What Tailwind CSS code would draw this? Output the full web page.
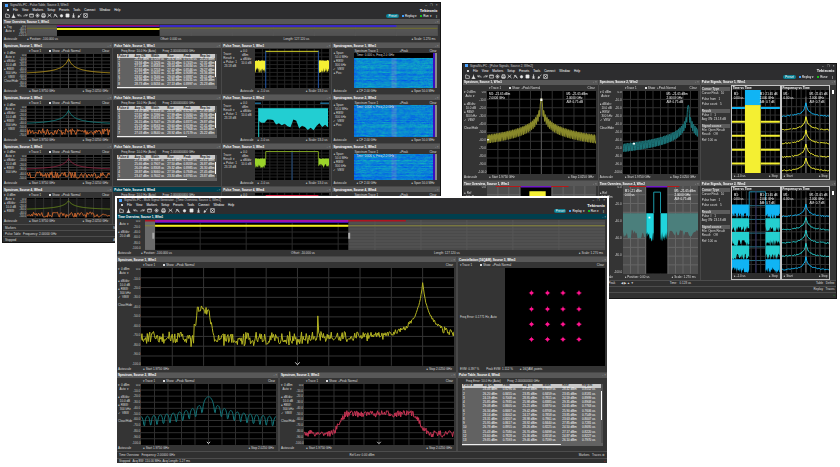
<!DOCTYPE html>
<html lang="en">
<head>
<meta charset="utf-8">
<title>SignalVu-PC displays</title>
<script src="https://cdn.jsdelivr.net/npm/@tailwindcss/browser@4"></script>
</head>
<body class="bg-white font-['Liberation_Sans',Arial,sans-serif]">
<main class="relative h-screen w-full overflow-hidden text-[3px] leading-[4px] text-white">
  <section id="pulse" aria-label="Pulse analysis" class="absolute left-[0.25%] top-[0.45%] grid h-[51.6%] w-[52.2%] grid-cols-1 grid-rows-[16px_23fr_52fr_49fr_43fr_38fr_6px_6px_6px] overflow-hidden border border-[#151515] bg-[#484848]"></section>
  <section id="spectra" aria-label="Spectrum analysis" class="absolute left-[55%] top-[13.4%] grid h-[50.6%] w-[44.7%] grid-cols-1 grid-rows-[16px_102fr_101fr_6px_6px_6px] overflow-hidden border border-[#151515] bg-[#484848]"></section>
  <section id="overview" aria-label="Time overview" class="absolute left-[13.7%] top-[42%] grid h-[57.5%] w-[58.8%] grid-cols-1 grid-rows-[16px_42fr_116fr_79fr_7px_5px] overflow-hidden border-2 border-white bg-[#484848]"></section>
</main>
<script>
let seed = 7;
const rnd = () => (seed = (seed * 16807) % 2147483647) / 2147483647;
let uid = 0;

// Toolbar icons, drawn in a 16-unit box
const ICONS = {
  Open: '<path d="M2 14V3h5l2 3h5v8z" fill="none"/>',
  Save: '<path d="M8 2v8M4 14l4-8 4 8zM2 14h12"/>',
  Undo: '<path d="M3 3v6h6M3 9c3-5 10-5 10 3" fill="none"/>',
  Redo: '<path d="M13 3v6H7M13 9C10 4 3 4 3 12" fill="none"/>',
  Window: '<path d="M2 3h12v10H2zM2 5h12" fill="none"/>',
  Settings: '<circle cx="8" cy="8" r="5" fill="none" stroke-width="3" stroke-dasharray="3 1"/><circle cx="8" cy="8" r="2"/>',
  Print: '<path d="M4 6V2h8v4M2 6h12v6H2zM4 10h8v4H4z" fill="none"/>',
  Trace: '<path d="M2 14 7 7 3 2M14 14 9 7l4-5M5 8h6" fill="none"/>',
  Peak: '<path d="M2 14 8 3l6 11M3 3l10 10" fill="none"/>',
  Marker: '<circle cx="8" cy="9" r="4"/>',
  Stop: '<path d="M3 3h10v10H3z"/>',
  Mark: '<path d="M8 2v10M5 9l3 4 3-4zM4 14h8M6 3h4"/>',
  Brush: '<path d="M14 2 8 9M3 14l2-6 4 4z"/>',
  Close: '<path d="M2 2h12v12H2zM4 4l8 8M12 4l-8 8" fill="none"/>'
};
const icon = n => `<button aria-label="${n}" class="size-[5px]"><svg viewBox="0 0 16 16" class="size-full fill-[#e8e8e8] stroke-[#e8e8e8] stroke-2">${ICONS[n]}</svg></button>`;

const chrome = (title, gap = 'gap-[1px]') => `
<header class="flex justify-between bg-[#2d2d2f] pl-[2px] pr-[2px]">
  <div class="flex flex-col justify-between">
    <div class="flex items-center gap-[2px] text-[#d0d0d0]"><i class="size-[3px] bg-[#4aa3ff]"></i><h1>${title}</h1></div>
    <nav class="flex items-center gap-[4px] pl-[2px]"><i class="size-[2px] bg-[#ccc]"></i>${['File', 'View', 'Markers', 'Setup', 'Presets', 'Tools', 'Connect', 'Window', 'Help'].map(m => `<button>${m}</button>`).join('')}</nav>
    <div class="flex ${gap} pb-[1px]">${Object.keys(ICONS).map(icon).join('')}</div>
  </div>
  <div class="flex flex-col items-end justify-between">
    <div class="flex gap-[3px] text-[#ddd]"><button aria-label="Minimize">–</button><button aria-label="Restore">❐</button><button aria-label="Close window">×</button></div>
    <strong class="text-[4px] leading-[4px]">Tektronix</strong>
    <div class="flex items-center gap-[3px] pb-[1px]"><button class="rounded-full bg-[#0b7f93] px-[2px]">Preset</button><button class="flex items-center gap-[1px]"><i class="size-[2px] bg-[#39a0ff]"></i>Replay ▾</button><button class="flex items-center gap-[1px]"><i class="size-[2px] bg-[#19c019]"></i>Run ▾</button><span>⋮</span></div>
  </div>
</header>`;

const panel = (title, body, active) => `
<section class="flex min-h-0 min-w-0 flex-col overflow-hidden bg-[#343434]">
  <h2 class="flex h-[5px] shrink-0 items-center justify-between px-[1px] font-bold ${active ? 'bg-[#003f4e]' : 'bg-[#585858]'}"><span class="whitespace-nowrap">${title}</span><span class="font-normal text-[#aaa]">▫ ×</span></h2>
  <div class="flex min-h-0 flex-1">${body}</div>
</section>`;

const side = (items, foot = 'Autoscale', w = 'w-[15px]', pt = 'pt-[5px]') => `
<div class="flex ${w} shrink-0 flex-col whitespace-nowrap pl-[1px] ${pt} text-[#ddd]">
  <div class="min-h-0 flex-1">${items.map(t => `<p>${t || '&nbsp;'}</p>`).join('')}</div>${foot ? `<p class="h-[6px] pt-[1px]">${foot}</p>` : ''}</div>`;
const SPEC = ['▾ 0 dBm', '&nbsp; Auto ▾', '', '● dB/div:', '&nbsp; 10.0 dB', '● RBW:', '&nbsp; 300 kHz', '✓ VBW', '', 'Clear/Hide'];
const COMPACT = SPEC.filter(t => t);

const axis = (n, step) => `<div class="flex w-[9px] shrink-0 flex-col justify-between overflow-hidden pr-[1px] text-right text-[#ccc]">${Array.from({ length: n }, (_, i) => `<p class="leading-[3px]">${i ? '-' : ''}${(i * step).toFixed(1)}</p>`).join('')}</div>`;

const tabs = () => { const id = 't' + uid++; return `
<div class="flex h-[6px] shrink-0 items-center gap-[6px] whitespace-nowrap pl-[2px] text-[#ddd]">
  <label for="${id}" class="flex items-center">▾<select id="${id}" class="h-[4px] w-[12px] appearance-none bg-transparent p-0 leading-[4px]"><option>Trace 1</option></select></label>
  <label class="flex items-center gap-[1px]"><input type="checkbox" checked class="size-[2px] appearance-none bg-[#ddd]">Show&nbsp; +Peak Normal</label><button class="ml-auto pr-[1px]">Clear</button></div>`; };
const foot = (a, b) => `<div class="flex h-[6px] shrink-0 items-center justify-between whitespace-nowrap px-[2px] text-[#ddd]"><span>● ${a}</span><span>● ${b}</span></div>`;

const svg = (inner, grid = '#303030', bg = 'bg-black') => {
  let g = '';
  for (let i = 1; i < 10; i++) g += `M${i * 100} 0V1000M0 ${i * 100}H1000`;
  return `<div class="relative min-h-0 min-w-0 flex-1 ${bg}"><svg viewBox="0 0 1000 1000" preserveAspectRatio="none" class="absolute inset-0 size-full *:[vector-effect:non-scaling-stroke]"><path d="${g}" stroke="${grid}" fill="none" stroke-width="1"/>${inner}</svg></div>`;
};
const line = (f, color, n = 160, w = 1) => {
  let d = '';
  for (let i = 0; i <= n; i++) { const x = i / n; d += `${i ? 'L' : 'M'}${Math.round(x * 1000)} ${Math.round(f(x) * 1000)}`; }
  return `<path d="${d}" fill="none" stroke="${color}" stroke-width="${w}" stroke-linejoin="round"/>`;
};
const box = (x, y, w, h, c) => `<rect x="${x}" y="${y}" width="${w}" height="${h}" fill="${c}"/>`;
const seg = (d, c, w = 1) => `<path d="${d}" stroke="${c}" fill="none" stroke-width="${w}"/>`;
const ragged = (x0, x1, y0, y1, amp, c, top = 0) => {
  let d = `M${x0} ${y0}`; const n = 24;
  for (let i = 0; i <= n; i++) d += `L${x0 + (x1 - x0) * i / n} ${y0 + rnd() * top}`;
  for (let i = n; i >= 0; i--) d += `L${x0 + (x1 - x0) * i / n} ${y1 + (rnd() - .3) * amp}`;
  return `<path d="${d}Z" fill="${c}"/>`;
};
const peak = (x, cx = .5) => .62 - .48 / (1 + Math.abs(x - cx) / .08);
const lobes = (cx, k, top, depth) => x => {
  const u = Math.abs(x - cx) * k + 1e-6, env = 20 * Math.log10(Math.max(1, Math.PI * u));
  return top + .0108 * Math.min(-20 * Math.log10(Math.abs(Math.sin(Math.PI * u) / (Math.PI * u)) + 1e-5), env + depth);
};
const spectrum = (title, chart, n = 11, items = SPEC, pt = 'pt-[5px]') => panel(title,
  side(items, 'Autoscale', 'w-[15px]', pt) + `<div class="flex min-w-0 flex-1 flex-col pr-[2px]"><div class="pl-[9px]">${tabs()}</div><div class="flex min-h-0 flex-1">${axis(n, 10)}${chart}</div><div class="pl-[9px]">${foot('Start 1.9750 GHz', 'Stop 2.0250 GHz')}</div></div>`);

const num = (a, d, u) => (a + rnd() * a * .3).toFixed(d) + u;
const table = (title, rows, cols, active) => panel(title, `
<div class="flex min-w-0 flex-1 flex-col px-[4px] pb-[5px]">
  <p class="h-[6px] shrink-0 whitespace-pre pl-[4px] pt-[1px] text-[#ddd]">Freq Error: 10.0 Hz (Auto)        Freq: 2.000000000 GHz</p>
  <div class="flex min-h-0 flex-1 flex-col overflow-hidden bg-[#626262]">
  <div class="flex min-h-0 flex-1"><table class="w-full table-fixed text-left">
    <thead><tr class="bg-[#c9c9c9] text-[#222]">${cols.map(c => `<th class="h-[4px] p-0 pl-[1px] leading-[3px]">${c}</th>`).join('')}</tr></thead>
    <tbody>${Array.from({ length: rows }, (_, r) => `<tr>${cols.map((c, i) => `<td class="whitespace-nowrap p-0 pl-[1px] leading-[3px]">${i ? num(i % 2 ? 23.1 : .7, i % 2 ? 2 : 4, i % 2 ? ' dBm' : ' us') : r + 1}</td>`).join('')}</tr>`).join('')}</tbody></table>
  <div class="w-[2px] shrink-0 bg-[#505050]"><i class="mt-[7px] block h-1/2 w-px bg-white"></i></div></div>
  <i class="my-[1px] h-[1px] w-[70%] shrink-0 bg-[#eee]"></i></div>
</div>`, active);

const statusBar = (l, m, r) => `<div class="grid grid-cols-[1fr_2fr_1fr] items-center whitespace-nowrap border-t border-[#4d4d4d] bg-[#303030] px-[2px] text-[#ddd]"><span>${l}</span><span>${m}</span><span class="text-right">${r}</span></div>`;

/* ---- Pulse window ---- */
const orange = (l, a) => line(() => l + (rnd() - .5) * a, '#c2622c', 90);
const cursor = seg('M500 0V1000', '#4a4a4a');
const spectra = [
  svg(cursor + line(x => peak(x), '#b8961c')),
  svg(cursor + line(x => peak(x), '#168080') + orange(.83, .22)),
  svg(cursor + line(x => peak(x), '#8c2440') + orange(.8, .26)),
  svg(cursor + line(x => peak(x), '#66861c') + orange(.84, .26))
];
const burst = (c, y, h) => ragged(0, 145, y, y + h, 160, c, 30) + ragged(855, 1000, y, y + h, 160, c, 30);
const traces = [
  burst('#f4ef32', 280, 240) + seg('M145 40V1000M855 40V1000', '#2458a8') + seg('M145 60H855', '#d8d42a'),
  ragged(50, 985, 200, 590, 330, '#22ced2') + seg('M0 60H80M880 60H1000', '#2c9cd8') + seg('M50 200V1000', '#22ced2'),
  burst('#9bd42a', 270, 230) + seg('M500 60V1000', '#234e80') + seg('M145 300V50H855V300', '#7a9c20'),
  seg('M145 100H855', '#d82848')
].map(t => svg(t, '#242424'));
const pulseTrace = (i, n) => panel(`Pulse Trace, Source ${n}, Wfm${n}`,
  side(['Trace:', 'Result ▾', '● Pulse: 1', '&nbsp;23.18 dB'], '', 'w-[17px]', 'pt-[4px]') + side(['● 0.0', '&nbsp; dBm', '● dB/div', '&nbsp;10.0 dB'], 'Autoscale', 'w-[16px]', 'pt-[1px]') +
  `<div class="flex min-w-0 flex-1 flex-col pr-[2px] pt-[1px]">${traces[i]}${foot('-1.0 us', 'Scale: 13.0 us')}</div>`);
const spectrogram = (i, n) => panel(`Spectrogram, Source ${n}, Wfm${n}`,
  side(['● Span:', '&nbsp; 50.0 MHz', '● RBW:', '&nbsp; 300 kHz', '✓ VBW', '● Pos:'].slice(0, i < 2 ? 6 : 5), 'Autoscale', 'w-[22px]', 'pt-[3px]') +
  `<div class="flex min-w-0 flex-1 flex-col pr-[3px]"><div class="flex h-[5px] shrink-0 items-center justify-between whitespace-nowrap text-[#ddd]"><span>Spectrum Trace 1</span><span>+Peak</span><button>Clear</button></div>
  <div class="flex min-h-0 flex-1"><div class="relative min-w-0 flex-1 bg-black ${i === 0 ? 'pt-[5px]' : ''}"><canvas width="78" height="34" class="block size-full"></canvas><span class="absolute left-[2px] top-0 text-[#ddd]">Time: 0.000 s, Freq 2.0 GHz</span></div><i class="w-[2px] bg-[#3a10c0]"></i><i class="w-[2px] bg-[#8a8a8a]"></i></div>${foot('CF 2.00 GHz', 'Span 50.0 MHz')}</div>`);
const TC = ['Pulse #', 'Avg ON', 'Width', 'Rise', 'Peak', 'Rep Int'];
const timeOverview = (title, chart, active, items, a, b, pt) => panel(title, side(items, 'Autoscale', 'w-[15px]', pt) +
  `<div class="flex min-w-0 flex-1 flex-col pr-[2px] pt-[1px]"><div class="flex min-h-0 flex-1">${chart}</div><div class="flex h-[6px] shrink-0 items-center justify-between pl-[9px] pr-[2px] text-[#ddd]"><span>● Position: -100.000 us</span><span>${a}</span><span>${b}</span><span>● Scale: 1.270 ms</span></div></div>`, active);
document.getElementById('pulse').innerHTML = chrome('SignalVu-PC - Pulse Table, Source 3, Wfm3') +
  timeOverview('Time Overview, Source 1, Wfm1', axis(4, 40) + svg(box(73, 0, 250, 1000, '#000') + seg('M0 300H1000', '#74722e') + seg('M73 360H323', '#f2ee20', 2) + box(73, 0, 250, 90, '#a00f50') + seg('M73 130H323', '#5a18c8') + seg('M323 80H900', '#3828c4', 2), '#555', 'bg-[#4b4b4b]'), false, ['● Trig', '&nbsp; Auto ▾'], 'Offset: 0.000 us', 'Length: 127.120 us', 'pt-[1px]') +
  [1, 2, 3, 4].map(i => `<div class="grid min-h-0 grid-cols-[110fr_109fr_110fr_108fr] gap-[1px] pt-[1px]">${spectrum(`Spectrum, Source ${i}, Wfm${i}`, spectra[i - 1], [10, 8, 6, 6][i - 1], COMPACT.slice(0, [8, 7, 6, 5][i - 1]), i < 3 ? 'pt-[3px]' : 'pt-[1px]')}${table(`Pulse Table, Source ${i}, Wfm${i}`, [8, 7, 5, 4][i - 1], TC, i === 4)}${pulseTrace(i - 1, i)}${spectrogram(i - 1, i)}</div>`).join('') +
  statusBar('Markers', 'Markers not available in selected view', '') + statusBar('Pulse Table &nbsp; Frequency: 2.00000 GHz', '', '') + statusBar('Stopped', 'Acq BW: 110.00 MHz, Acq Length: 1.27 ms &nbsp; Ref: Int', '');

/* ---- Spectrum window ---- */
const note = (x, y, t = ['M1: -21.65 dBm', '2.0000 GHz', 'ΔM: 0.75 dB']) => `<div class="pointer-events-none absolute ${x} ${y} whitespace-nowrap leading-[4px]">${t.map(s => `<p>${s}</p>`).join('')}</div>`;
const withNotes = (chart, ...ns) => chart.replace('</svg>', '</svg>' + ns.join(''));
const white = seg('M500 0V1000', '#555');
const specA = withNotes(svg(white + line(lobes(.5, 66.3, .09, 9), '#88882a', 420) + box(490, 90, 20, 30, '#fff') + box(0, 575, 20, 15, '#fff')), note('left-[2px]', 'top-[1px]', ['M1: -21.65 dBm', '2.0000 GHz']), note('right-[8px]', 'top-[1px]'));
const specB = withNotes(svg(line(lobes(.87, 50, .17, 9), '#1c7478', 320) + box(130, 620, 30, 20, '#fff')), note('right-[10px]', 'top-[1px]'));
const freqs = cs => svg(seg('M500 80V1000', '#777') + cs.map((c, k) => line(x => .32 + k * .163 - .17 / (1 + Math.abs(x - .5) / .05) + rnd() * .014, c, 60)).join('') + seg('M200 100V900M780 100V900', '#333'));
const Y = '#f4ef32', B = '#10b4f4', T = '#25cfcf';
const timeY = svg(box(270, 0, 330, 180, B) + box(270, 180, 330, 820, Y) + [0, 1, 2, 3, 4].map(k => seg(`M0 ${215 + k * 166}H270M600 ${215 + k * 166}H1000`, k ? Y : B, 2)).join(''));
const timeT = svg([B, T, T, T, B].map((c, k) => ragged(0, 360, 165 + k * 168, 285 + k * 168, 80, c) + ragged(700, 1000, 165 + k * 168, 285 + k * 168, 80, c) + seg(`M360 ${180 + k * 168}H700`, '#246c80')).join('') + seg('M360 300V10H700V300', '#1c86a8') + seg('M500 0V1000', '#336'));
const frame = (t, c, f) => `<div class="flex min-w-0 flex-1 flex-col border border-[#c4c4c4] bg-[#2c2c2c]"><h3 class="h-[4px] shrink-0 whitespace-nowrap pl-[1px] font-bold">${t}</h3>${withNotes(c, note('left-[2px]', 'top-[2px]', ['M1:', '0.00 us']), note('right-[2px]', 'top-[2px]', ['M1: 21.65 dB', '2.000 GHz', 'ΔM: 0.7 dB']))}${foot(f, 'Stop')}</div>`;
const pulseSpectra = (n, t, f) => panel(`Pulse Signals, Source ${n}, Wfm${n}`, `
  <div class="w-[30px] shrink-0 whitespace-nowrap px-[1px] text-[#ddd]">
    <h3 class="mt-[2px] bg-[#5c5c5c] font-bold">Cursor Type</h3><p>Cursor Peak &nbsp; 10</p><p class="mt-[2px]">Pulse from &nbsp; 1</p><p class="mt-[1px]">Pulse count &nbsp; 5</p>
    <h3 class="mt-[3px] bg-[#5c5c5c] font-bold">Result</h3><p>Pulse # &nbsp; 1</p><p>Avg ON: 23.18 dB</p>
    <h3 class="mt-[3px] bg-[#5c5c5c] font-bold">Signal source</h3><p>File: Open Result</p><p>Result: &nbsp; Off</p><p class="mt-[2px]">Ref: 100 us</p></div>
  ${frame('Time vs Time', t, '-1.0 us')}${frame('Frequency vs Time', f, 'Start')}<div class="w-[6px] shrink-0 pt-[5px] pl-[2px]"><i class="block h-[4px] w-[2px] bg-white"></i></div>`);
const capture = (c, dim, active) => svg(ragged(0, 310, 310, 530, 110, dim) + ragged(590, 1000, 310, 530, 110, dim) + box(310, 0, 280, 1000, '#000') + ragged(310, 410, 310, 550, 120, c) + ragged(500, 590, 310, 550, 120, c) + seg('M410 310V70H500V310', '#1c9aa8') + seg('M80 0H750', '#b81818', 2) + seg('M310 0H590', '#7018c8', 3) + active, '#666', 'bg-[#4e4e4e]');
const captureY = capture('#000', '#4e4e4e', box(390, 60, 150, 900, Y));
const captureT = withNotes(capture('#20d4dc', '#4b7f7c', box(340, 350, 24, 20, '#fff')), note('left-[2px]', 'top-[3px]', ['M1: -21 dBm', '0.00 us']), note('right-[2px]', 'top-[3px]'));
const capPanel = (n, c) => panel(`Time Overview, Source ${n}, Wfm${n}`, side(['● Ref', '&nbsp; 0.0 dBm']) + `<div class="flex min-w-0 flex-1 flex-col pr-[2px]"><div class="flex min-h-0 flex-1">${axis(6, 20)}${c}</div><div class="pl-[9px]">${foot('Position: 0.00 us', 'Scale: 1.270 ms')}</div></div>`);
document.getElementById('spectra').innerHTML = chrome('SignalVu-PC - [Pulse Signals, Source 2, Wfm2]') +
  `<div class="grid min-h-0 grid-cols-[136fr_102fr_137fr] gap-[1px]">${spectrum('Spectrum, Source 1, Wfm1', specA)}${spectrum('Spectrum, Source 2, Wfm2', specB)}${pulseSpectra(1, timeY, freqs([B, Y, Y, Y, Y]))}</div>
   <div class="grid min-h-0 grid-cols-[136fr_102fr_137fr] gap-[1px] pt-[1px]">${capPanel(1, captureY)}${capPanel(2, captureT)}${pulseSpectra(2, timeT, freqs([B, T, T, T, B]))}</div>` +
  statusBar('Markers', '<span class="flex justify-center gap-[6px]"><button>Peak</button><button>◀ ▶ ▲ ▼</button><span class="pl-[30px]">Time: &nbsp; 0.128 us</span></span>', '<button>Table</button> &nbsp; <button>Define</button>') + statusBar('', '', '<button>Replay</button> &nbsp; <button>Traces</button>') + statusBar('', '', '<b class="text-[#20b020]">▪</b>');

/* ---- Overview window ---- */
const mainSpec = svg(line(x => {
  let f = .72 + (rnd() - .5) * .14;
  if (x > .168 && x < .232) f = Math.min(f, .43 + (rnd() - .5) * .12 + Math.max(0, .182 - x) * 14 + Math.max(0, x - .214) * 13);
  if (Math.abs(x - .565) < .0015) f = .49;
  const s = .79 - .64 / (1 + Math.abs(x - .9) / .022);
  return s < f ? s + (rnd() - .5) * .07 * Math.min(1, Math.abs(x - .9) * 15) : f;
}, '#b4b422', 400) + seg('M493 965L500 990L507 965', '#ccc'), '#343434');
const teal = svg(line(lobes(.5, 21, .21, 14), '#137478', 300) + seg('M488 950L500 980L512 950', '#ccc'));
const red = svg(line(x => {
  const n = (rnd() - .5) * .11;
  const s = t => t * t * (3 - 2 * t), cl = t => Math.max(0, Math.min(1, t));
  return .81 - .32 * s(cl((x - .18) / .11)) + .33 * s(cl((x - .72) / .12)) + n;
}, '#c83454', 220) + seg('M488 950L500 980L512 950', '#ccc'));
let dots = '';
for (const x of [265, 425, 580, 740]) for (const y of [255, 420, 575, 730]) dots += `<path d="M${x - 26} ${y}h52M${x} ${y - 26}v52" stroke="#b00858" stroke-width="1"/><circle cx="${x}" cy="${y}" r="17" fill="#ff1490"/>`;
const constellation = panel('Constellation (16QAM), Source 3, Wfm3', `<div class="flex min-w-0 flex-1 flex-col pr-[2px]">${tabs()}<div class="flex min-h-0 flex-1"><p class="flex w-[32%] items-center pl-[2px] text-[#ddd]">Freq Error: 0.1771 Hz, Auto</p><div class="relative min-h-0 flex-1 bg-black"><svg viewBox="0 0 1000 1000" preserveAspectRatio="none" class="absolute inset-0 size-full *:[vector-effect:non-scaling-stroke]">${dots}</svg></div></div><div class="flex h-[6px] shrink-0 items-center gap-[7px] pl-[2px] text-[#ddd]"><span>EVM: 0.397 %</span><span>Peak EVM: 1.112 %</span><span>● 16QAM, points</span></div></div>`);
document.getElementById('overview').innerHTML = chrome('SignalVu-PC - Multi Signal Generator - [Time Overview, Source 1, Wfm1]', 'gap-[2px]') +
  timeOverview('Time Overview, Source 1, Wfm1', axis(6, 20) + `<div class="flex min-w-0 flex-1 pl-[4px]">${svg(box(0, 0, 22, 1000, '#6a6a6a') + box(22, 60, 420, 940, '#000') + seg('M120 60V1000M220 60V1000M320 60V1000M420 60V1000M22 400H442M22 600H442M22 800H442', '#2a2a2a') + seg('M0 190H1000', '#86853a') + seg('M22 190H442', '#f4f020', 2) + seg('M0 20H567', '#b01420', 2) + seg('M22 20H442', '#a010a8', 3) + seg('M22 80H442', '#3418a8') + seg('M18 430V630M444 430V630', '#aaa', 2), '#565656', 'bg-[#4a4a4a]')}</div>`, true, ['&nbsp; Auto ▾', '', '● dB/div:', '&nbsp; 20.0 dB'], 'Offset: -10.000 us', 'Length: 127.120 us', 'pt-[3px]') +
  `<div class="grid min-h-0 grid-cols-[339fr_149fr] gap-[2px] pt-[1px]">${spectrum('Spectrum, Source 1, Wfm1', mainSpec)}${constellation}</div>
   <div class="grid min-h-0 grid-cols-[161fr_176fr_149fr] gap-[2px] pt-[1px]">${spectrum('Spectrum, Source 2, Wfm2', teal)}${spectrum('Spectrum, Source 3, Wfm3', red)}${table('Pulse Table, Source 4, Wfm4', 13, ['Pulse #', 'Avg ON', 'Peak', 'Avg Tx', 'Width', 'Rise', 'Rep Int'])}</div>` +
  statusBar('Time Overview &nbsp; Frequency: 2.00000 GHz', '<span class="block text-center">Ref Lev: 0.00 dBm</span>', '<button>Markers</button> &nbsp; <button>Traces</button> ⚙') + statusBar('Stopped &nbsp; Acq BW: 110.00 MHz, Acq Length: 1.27 ms', '', '<b class="text-[#d02020]">▪</b>');

// Spectrogram heat maps: horizontally streaked blue and cyan noise
document.querySelectorAll('canvas').forEach(c => {
  const g = c.getContext('2d');
  for (let y = 0; y < c.height; y++) {
    const row = rnd() * .35; let v = 0;
    for (let x = 0; x < c.width; x++) {
      v = v * .55 + rnd() * .45;
      const t = Math.min(1, v * .75 + row), mid = Math.abs(x - 39) < 3 ? 40 : 0;
      g.fillStyle = `rgb(${(mid + t * 20) | 0},${(70 + t * 120) | 0},${(245 - t * 60) | 0})`;
      g.fillRect(x, y, 1, 1);
    }
  }
});
</script>
</body>
</html>
